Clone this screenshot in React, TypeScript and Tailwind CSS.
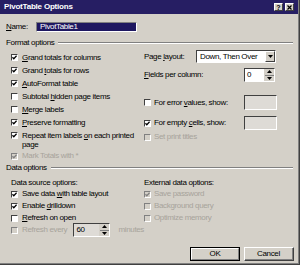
import React from "react";

function Check({ checked = false, disabled = false }: { checked?: boolean; disabled?: boolean }) {
  return (
    <span
      className={
        disabled
          ? "flex items-center justify-center w-[7px] h-[7px] shrink-0 border-t border-l border-t-[#808080] border-l-[#808080] border-b border-r border-b-white border-r-white bg-[#d4d0c8]"
          : "flex items-center justify-center w-[7px] h-[7px] shrink-0 border-t border-l border-t-[#404040] border-l-[#404040] border-b border-r border-b-white border-r-white bg-white"
      }
    >
      {checked && (
        <svg width="5" height="5" viewBox="0 0 5 5">
          <path
            d="M0.4 2.3 L1.8 3.8 L4.6 0.8"
            fill="none"
            stroke={disabled ? "#808080" : "#000"}
            strokeWidth="1.3"
          />
        </svg>
      )}
    </span>
  );
}

function U({ children }: { children: React.ReactNode }) {
  return <span className="underline underline-offset-[1px]">{children}</span>;
}

function LRow({
  checked,
  disabled,
  children,
}: {
  checked?: boolean;
  disabled?: boolean;
  children: React.ReactNode;
}) {
  return (
    <div className="flex items-center h-[13px] pl-[5px]">
      <Check checked={checked} disabled={disabled} />
      <span className={disabled ? "ml-[4px] text-[#a7a39b]" : "ml-[4px]"}>{children}</span>
    </div>
  );
}

function DRow({
  checked,
  disabled,
  children,
  indent,
}: {
  checked?: boolean;
  disabled?: boolean;
  children: React.ReactNode;
  indent?: boolean;
}) {
  return (
    <div className={indent ? "flex items-center h-[12px] pl-[5px]" : "flex items-center h-[12px]"}>
      <Check checked={checked} disabled={disabled} />
      <span className={disabled ? "ml-[4px] text-[#a7a39b]" : "ml-[4px]"}>{children}</span>
    </div>
  );
}

function SpinArrows() {
  return (
    <div className="flex flex-col w-[10px] h-full border-l border-[#d4d0c8]">
      <div className="flex-1 flex items-center justify-center bg-[#d4d0c8] border-b border-[#808080]">
        <svg width="5" height="3" viewBox="0 0 5 3">
          <path d="M0 3 L2.5 0 L5 3 Z" fill="#000" />
        </svg>
      </div>
      <div className="flex-1 flex items-center justify-center bg-[#d4d0c8]">
        <svg width="5" height="3" viewBox="0 0 5 3">
          <path d="M0 0 L2.5 3 L5 0 Z" fill="#000" />
        </svg>
      </div>
    </div>
  );
}

function Header({ children }: { children: React.ReactNode }) {
  return (
    <div className="flex items-center h-[10px]">
      <span>{children}</span>
      <div className="flex-1 ml-[4px] h-0 border-t border-t-[#808080] border-b border-b-white" />
    </div>
  );
}

export default function App() {
  return (
    <div className="w-[300px] h-[265px] bg-[#d4d0c8] border-r border-b border-[#404040] overflow-hidden font-['Liberation_Sans',Arial,sans-serif] text-[8px] leading-none tracking-[-0.35px] text-black">
      <div className="h-full flex flex-col border-r border-b border-[#808080]">
        {/* Title bar */}
        <div className="h-[14px] shrink-0 bg-[#261e63] flex items-center pl-[4px] pr-[4px]">
          <span className="text-white font-bold tracking-[-0.2px]">PivotTable Options</span>
          <div className="flex-1" />
          <div className="flex items-center gap-[2px]">
            <div className="w-[9px] h-[8px] bg-[#d4d0c8] border-t border-l border-t-white border-l-white border-b border-r border-b-[#404040] border-r-[#404040] flex items-center justify-center text-[7px] font-bold tracking-normal">
              ?
            </div>
            <div className="w-[9px] h-[8px] bg-[#d4d0c8] border-t border-l border-t-white border-l-white border-b border-r border-b-[#404040] border-r-[#404040] flex items-center justify-center">
              <svg width="5" height="5" viewBox="0 0 5 5">
                <path d="M0.5 0.5 L4.5 4.5 M4.5 0.5 L0.5 4.5" stroke="#000" strokeWidth="1.2" />
              </svg>
            </div>
          </div>
        </div>

        {/* Body */}
        <div className="flex flex-col pl-[6px] pr-[5px] pt-[8px]">
          {/* Name */}
          <div className="flex items-center h-[10px]">
            <span className="w-[30px]">
              <U>N</U>ame:
            </span>
            <div className="w-[101px] h-[10px] flex items-center pl-[3px] bg-[#1e1760] text-white border-t border-l border-t-[#808080] border-l-[#808080] border-b border-r border-b-white border-r-white">
              PivotTable1
            </div>
          </div>

          <div className="mt-[6px]">
            <Header>Format options</Header>
          </div>

          <div className="flex mt-[2px]">
            {/* left column */}
            <div className="w-[138px] shrink-0 flex flex-col pt-[1px]">
              <LRow checked>
                <U>G</U>rand totals for columns
              </LRow>
              <LRow checked>
                Grand <U>t</U>otals for rows
              </LRow>
              <LRow checked>
                <U>A</U>utoFormat table
              </LRow>
              <LRow>
                Subtotal <U>h</U>idden page items
              </LRow>
              <LRow>
                <U>M</U>erge labels
              </LRow>
              <LRow checked>
                <U>P</U>reserve formatting
              </LRow>
              <div className="flex items-start h-[21px] pl-[5px] pt-[2px]">
                <div className="mt-[1px]">
                  <Check checked />
                </div>
                <span className="ml-[4px] leading-[9px]">
                  Repeat item labels <U>o</U>n each printed
                  <br />
                  page
                </span>
              </div>
              <div className="flex items-center h-[12px] pl-[5px]">
                <Check checked disabled />
                <span className="ml-[4px] text-[#a7a39b]">Mark Totals with *</span>
              </div>
            </div>

            {/* right column */}
            <div className="flex-1 flex flex-col">
              <div className="flex items-center h-[13px]">
                <span className="w-[52px]">
                  Page <U>l</U>ayout:
                </span>
                <div className="w-[80px] h-[13px] flex items-center bg-white border-t border-l border-t-[#404040] border-l-[#404040] border-b border-r border-b-white border-r-white">
                  <span className="flex-1 pl-[3px]">Down, Then Over</span>
                  <div className="w-[10px] h-full flex items-center justify-center bg-[#d4d0c8] border-t border-l border-t-white border-l-white border-b border-r border-b-[#404040] border-r-[#404040]">
                    <svg width="5" height="3" viewBox="0 0 5 3">
                      <path d="M0 0 L2.5 3 L5 0 Z" fill="#000" />
                    </svg>
                  </div>
                </div>
              </div>
              <div className="flex items-center h-[14px] mt-[5px]">
                <span className="w-[100px]">
                  <U>F</U>ields per column:
                </span>
                <div className="w-[31px] h-[14px] flex items-center bg-white border-t border-l border-t-[#404040] border-l-[#404040] border-b border-r border-b-white border-r-white">
                  <span className="flex-1 pl-[2px]">0</span>
                  <SpinArrows />
                </div>
              </div>
              <div className="flex items-center h-[15px] mt-[13px]">
                <Check />
                <span className="ml-[3px] w-[90px]">
                  For error <U>v</U>alues, show:
                </span>
                <div className="w-[33px] h-[15px] bg-[#dedbd6] border-t border-l border-t-[#404040] border-l-[#404040] border-b border-r border-b-white border-r-white" />
              </div>
              <div className="flex items-center h-[14px] mt-[6px]">
                <Check checked />
                <span className="ml-[3px] w-[90px]">
                  For empty <U>c</U>ells, show:
                </span>
                <div className="w-[33px] h-[14px] bg-[#dedbd6] border-t border-l border-t-[#404040] border-l-[#404040] border-b border-r border-b-white border-r-white" />
              </div>
              <div className="flex items-center h-[10px] mt-[2px]">
                <Check disabled />
                <span className="ml-[3px] text-[#a7a39b]">Set print titles</span>
              </div>
            </div>
          </div>

          <div className="mt-[1px]">
            <Header>Data options</Header>
          </div>

          <div className="flex">
            <div className="w-[138px] shrink-0 flex flex-col">
              <div className="flex items-center h-[10px] mt-[5px] pl-[5px]">Data source options:</div>
              <DRow checked indent>
                Save data <U>w</U>ith table layout
              </DRow>
              <DRow checked indent>
                Enable <U>d</U>rilldown
              </DRow>
              <DRow indent>
                <U>R</U>efresh on open
              </DRow>
              <div className="flex items-center h-[12px] pl-[5px]">
                <Check disabled />
                <span className="ml-[4px] w-[56px] text-[#a7a39b]">Refresh every</span>
                <div className="w-[37px] h-[14px] shrink-0 flex items-center bg-[#dedbd6] border-t border-l border-t-[#404040] border-l-[#404040] border-b border-r border-b-white border-r-white">
                  <span className="flex-1 pl-[2px]">60</span>
                  <SpinArrows />
                </div>
                <span className="ml-[8px] text-[#a7a39b]">minutes</span>
              </div>
            </div>
            <div className="flex-1 flex flex-col">
              <div className="flex items-center h-[10px] mt-[5px]">External data options:</div>
              <div className="flex items-center h-[12px]">
                <Check checked disabled />
                <span className="ml-[3px] text-[#a7a39b]">Save password</span>
              </div>
              <div className="flex items-center h-[12px]">
                <Check disabled />
                <span className="ml-[3px] text-[#a7a39b]">Background query</span>
              </div>
              <div className="flex items-center h-[12px]">
                <Check disabled />
                <span className="ml-[3px] text-[#a7a39b]">Optimize memory</span>
              </div>
            </div>
          </div>

          <div className="flex justify-end gap-[4px] mt-[11px] mr-[-1px]">
            <div className="w-[50px] h-[14px] border border-black">
              <div className="h-full flex items-center justify-center border-t border-l border-t-white border-l-white border-b border-r border-b-[#808080] border-r-[#808080]">
                OK
              </div>
            </div>
            <div className="w-[50px] h-[14px] border-t border-l border-t-white border-l-white border-b border-r border-b-[#404040] border-r-[#404040]">
              <div className="h-full flex items-center justify-center border-b border-r border-b-[#808080] border-r-[#808080]">
                Cancel
              </div>
            </div>
          </div>
        </div>
      </div>
    </div>
  );
}
